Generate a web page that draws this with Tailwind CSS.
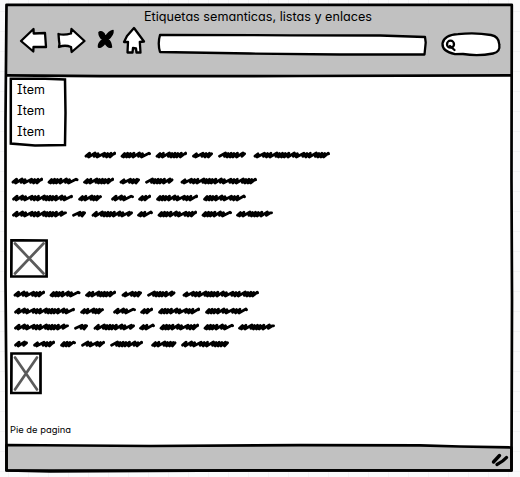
<!DOCTYPE html>
<html lang="es">
<head>
<meta charset="utf-8">
<title>Etiquetas semanticas, listas y enlaces</title>
<script src="https://cdn.jsdelivr.net/npm/@tailwindcss/browser@4"></script>
</head>
<body class="bg-[#fafafb] bg-[linear-gradient(#f2f2f4_1px,transparent_1px),linear-gradient(90deg,#f2f2f4_1px,transparent_1px)] bg-[size:20px_20px] bg-[position:8px_11px] font-['Inter','Lato',sans-serif] [font-feature-settings:'cv11','cv08'] text-black overflow-hidden">
<div class="relative w-[520px] h-[477px] pl-1.5 pr-[7px] pt-1 pb-[7px]">
  <div class="flex h-full flex-col bg-white">
    <header class="h-[72px] shrink-0 bg-[#c1c1c1]">
      <h1 class="h-6 pt-[4px] pl-[138px] leading-4"><svg class="block overflow-visible" width="230" height="17"><text x="0" y="13" font-size="12.5" textLength="228" lengthAdjust="spacingAndGlyphs">Etiquetas semanticas, listas y enlaces</text></svg></h1>
      <nav class="flex h-8 items-start pl-[12px]">
        <svg class="shrink-0 overflow-visible" width="482" height="32" viewBox="18 27.500 482 32" fill="white" stroke="black" stroke-width="2.3" stroke-linejoin="round" stroke-linecap="round">
          <path d="M21 40.500L33.500 28.500L33.700 33L45 32.500L46 46.500L33.500 46.500L33.300 51Z"/>
          <path d="M58.500 33.500Q64 35 71 33L71.500 28.500L84.500 40.500L71.700 51.500L71 46.500Q65 44 59 46.500Q60 44 59 40Z"/>
          <path fill="black" stroke-width="1.500" d="M99 32Q100.500 30 104 33L105.500 36.500Q109 30.500 113 30Q113.500 34 108 39Q111 41 111.500 46.500Q108 48 105 42.500Q101.500 47.500 98.500 46.500Q98 42.500 102.500 39Q99 36 99 32Z"/>
          <path d="M134 27.500L144 41L139.800 41.500L140.500 52L136.500 52L136 48L133 47.500L132.500 52L127.500 52L128 41.500L124 41.500L127 35.500Z"/>
          <path d="M160 34.500L290 34.800L380 35L425 36.500L425.700 42L424.500 54L340 54L250 53L160 51.500Q157.500 43 160 34.500Z"/>
          <path d="M458 33.700Q475 31.800 491 34.500Q499 36 499.300 44Q500.500 51.500 493 53Q478 56 463 53.500L455 53.700Q442 51 442.500 43Q444 34.500 458 33.700Z"/>
          <g><circle cx="450.500" cy="43.700" r="3.500"/><path d="M450 45.500L454.500 49.500"/></g>
        </svg>
      </nav>
    </header>
    <main class="flex flex-1 flex-col pl-1 pt-[2px]">
      <div class="relative h-[69px] w-[58px]">
        <svg class="absolute inset-0 overflow-visible" width="58" height="69" fill="none" stroke="black" stroke-width="2.500"><path d="M0.800 0.800L35 0.800L55 1.500L55.500 35L55 67L25 67.500L0.800 65.500Z"/></svg>
        <ul class="relative pt-px pl-[7px] text-[12.500px] leading-[21px]">
          <li>Item</li><li>Item</li><li>Item</li>
        </ul>
      </div>
      <svg data-line="84.5-116 120.5-151 155.5-187 192-213 218-246 253.500-330" class="mt-[2px] block" width="490" height="12"></svg>
      <div class="mt-[14px] flex flex-col gap-[4.500px]">
        <svg data-line="11.500-43 47.500-78.500 83-114 119.500-140 145-173.500 180.500-257" class="block" width="490" height="12"></svg>
        <svg data-line="12-73 78-102 111-134 138-151 156-198 203-246" class="block" width="490" height="12"></svg>
        <svg data-line="12-67 72-86 91.500-133 137-153 157.500-197 201.500-232 236-273" class="block" width="490" height="12"></svg>
      </div>
      <svg class="mt-[19px] block" width="38" height="40" fill="none"><path d="M1.500 1.300L36.600 1.500L36.600 37.500L1.300 37.500Z" stroke="black" stroke-width="2.700"/><path d="M5 4.500L33.500 34.500M33.500 4.500L5 34.500" stroke="#5b5b5b" stroke-width="2.700" stroke-linecap="round"/></svg>
      <div class="mt-[9px] flex flex-col gap-[4.500px]">
        <svg data-line="13.500-45 49.500-80.500 85-116 121.500-142 147-175.500 182.500-259" class="block" width="490" height="12"></svg>
        <svg data-line="14-75 80-104 113-136 140-153 158-200 205-248" class="block" width="490" height="12"></svg>
        <svg data-line="14-69 74-88 93.500-135 139-155 159.500-199 203.500-234 238-275" class="block" width="490" height="12"></svg>
        <svg data-line="14-28 33-55 60-76 81-105 110-143 151-176.500 181-229" class="block" width="490" height="12"></svg>
      </div>
      <svg class="mt-[2.500px] block" width="32" height="43" fill="none"><path d="M1.500 1.500L30.500 1.500L30.500 41L1.300 41Z" stroke="black" stroke-width="2.700"/><path d="M5 5.500L27 37.500M27 5.500L5 37.500" stroke="#5b5b5b" stroke-width="2.700" stroke-linecap="round"/></svg>
      <p class="mt-[27px]"><svg class="block overflow-visible" width="64" height="14"><text x="0" y="10.500" font-size="8.800" textLength="61" lengthAdjust="spacingAndGlyphs">Pie de pagina</text></svg></p>
    </main>
    <footer class="h-[24px] shrink-0"></footer>
  </div>
  <svg class="absolute left-0 top-0" width="520" height="477" fill="none" stroke="black" stroke-width="2.700" stroke-linejoin="round" stroke-linecap="round">
    <path fill="#c1c1c1" d="M6.500 445L150 446L300 445.200L420 445.300L460 446.500L511.500 447.500L511.500 470.500L120 470.500L6.500 470.500Z"/>
    <path d="M6.500 4.800L511.800 4.800L511.500 180L512 300L511.500 470.500L250 470.300L50 471.300L6.500 470.500L6.300 380L5.500 280L5.500 120Z"/>
    <path d="M6.500 75.300L100 76.200L300 76L511 75.300"/>
    <path stroke-width="3.400" d="M493.500 462L499.500 455.500M497 464.500Q503 461.500 506.500 457.500"/>
  </svg>
</div>
<script>
// Each data-line lists placeholder words as start-end positions along the line.
document.querySelectorAll('[data-line]').forEach(svg => {
  let seed = 7, d = '';
  // [advance, peak height]: long strokes read as letter joins, short ones as bowls.
  const steps = [[6.5, 4.2], [3, 4.6], [3.4, 4.2], [6, 4], [2.6, 4.6], [3, 4.3], [2.8, 4.5], [3.6, 4.2], [5.5, 4], [3, 4.8]];
  for (const word of svg.dataset.line.split(' ')) {
    const [a, b] = word.split('-').map(Number);
    let x = a - 10 + 1.5;
    const end = b - 10 - 1.4;
    d += `M${x} 7.2`;
    while (x < end - 3) {
      const [s, top] = steps[seed++ % steps.length];
      const px = Math.min(x + s, end);
      d += `L${px} ${top}`;
      x = px;
      if (x < end - 1.5) d += `L${x - 1} ${s > 5 ? 7.3 : 8}`;
    }
    d += `L${end} 4.8`;
  }
  svg.innerHTML = `<path d="${d}" fill="none" stroke="black" stroke-width="2.800" stroke-linecap="round" stroke-linejoin="round"/>`;
});
</script>
</body>
</html>
